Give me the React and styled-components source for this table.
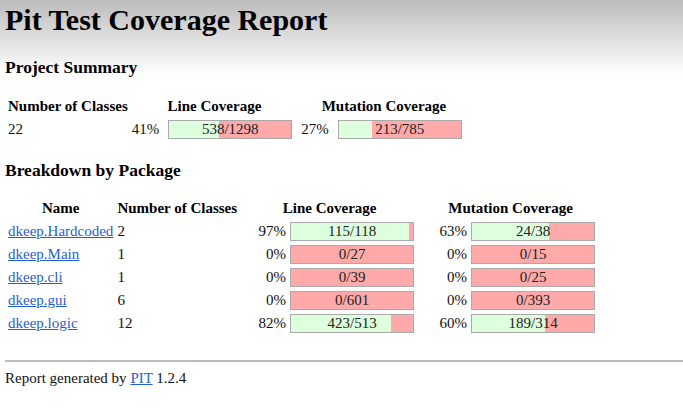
import React from 'react';
import styled, { createGlobalStyle } from 'styled-components';

const GlobalStyle = createGlobalStyle`
  html, body { margin: 0; padding: 0; background: #fff; }
  body {
    font-family: "Liberation Serif", "Times New Roman", serif;
    font-size: 15px;
    color: #111;
  }
`;

const Page = styled.div`
  min-height: 410px;
  padding: 3px 0 0 5px;
  box-sizing: border-box;
  background: linear-gradient(#bcbcbc, #ffffff) no-repeat;
  background-size: 100% 74px;
`;

const Title = styled.h1`
  margin: 0;
  font-size: 30px;
  line-height: 34px;
  font-weight: bold;
  color: #000;
`;

const SectionTitle = styled.h3`
  margin: ${(p) => p.$top}px 0 0;
  font-size: 17.5px;
  line-height: 20px;
  font-weight: bold;
  color: #000;
`;

const Table = styled.table`
  margin-top: ${(p) => p.$top}px;
  border-collapse: separate;
  border-spacing: 2px 0;
  font-size: 15px;
  line-height: 17px;
`;

const Th = styled.th`
  height: ${(p) => p.$h}px;
  padding: 0 1px;
  text-align: center;
  vertical-align: middle;
  font-weight: bold;
  white-space: nowrap;
  color: #000;
`;

const Td = styled.td`
  height: ${(p) => p.$h}px;
  padding: 0 1px;
  text-align: left;
  vertical-align: middle;
  white-space: nowrap;
`;

const PackageLink = styled.a`
  color: #1f60d2;
  text-decoration: underline;
`;

const CoverageCell = styled.div`
  display: flex;
  align-items: center;
  gap: ${(p) => (p.$summary ? 9 : 4)}px;
  padding-right: ${(p) => (p.$summary ? 5 : 4)}px;
`;

const Percentage = styled.span`
  flex: none;
  ${(p) => (p.$summary ? '' : 'width: 45px; text-align: right;')}
`;

const Bar = styled.div`
  position: relative;
  flex: none;
  width: 122px;
  height: 17px;
  border: 1px solid #aaa;
  background: #ffaaaa;
`;

const Complete = styled.div`
  height: 100%;
  background: #ddffdd;
`;

const Legend = styled.span`
  position: absolute;
  inset: 0;
  text-align: center;
  line-height: 17px;
  color: #222;
`;

const Rule = styled.hr`
  margin: 25px 0 0;
  height: 0;
  border: 0;
  border-top: 2px solid #bbb;
`;

const Footer = styled.p`
  margin: 8px 0 0;
  line-height: 17px;
`;

function Coverage({ covered, total, summary }) {
  const pct = total ? Math.round((covered / total) * 100) : 0;
  return (
    <CoverageCell $summary={summary}>
      <Percentage $summary={summary}>{pct}%</Percentage>
      <Bar>
        <Complete style={{ width: `${pct}%` }} />
        <Legend>
          {covered}/{total}
        </Legend>
      </Bar>
    </CoverageCell>
  );
}

const packages = [
  { name: 'dkeep.Hardcoded', classes: 2, line: [115, 118], mut: [24, 38] },
  { name: 'dkeep.Main', classes: 1, line: [0, 27], mut: [0, 15] },
  { name: 'dkeep.cli', classes: 1, line: [0, 39], mut: [0, 25] },
  { name: 'dkeep.gui', classes: 6, line: [0, 601], mut: [0, 393] },
  { name: 'dkeep.logic', classes: 12, line: [423, 513], mut: [189, 314] },
];

export default function App() {
  return (
    <>
      <GlobalStyle />
      <Page>
        <Title>Pit Test Coverage Report</Title>

        <SectionTitle $top={20}>Project Summary</SectionTitle>
        <Table $top={19}>
          <thead>
            <tr>
              <Th $h={20}>Number of Classes</Th>
              <Th $h={20}>Line Coverage</Th>
              <Th $h={20}>Mutation Coverage</Th>
            </tr>
          </thead>
          <tbody>
            <tr>
              <Td $h={27}>22</Td>
              <Td $h={27}>
                <Coverage covered={538} total={1298} summary />
              </Td>
              <Td $h={27}>
                <Coverage covered={213} total={785} summary />
              </Td>
            </tr>
          </tbody>
        </Table>

        <SectionTitle $top={17}>Breakdown by Package</SectionTitle>
        <Table $top={16}>
          <thead>
            <tr>
              <Th $h={24}>Name</Th>
              <Th $h={24}>Number of Classes</Th>
              <Th $h={24}>Line Coverage</Th>
              <Th $h={24}>Mutation Coverage</Th>
            </tr>
          </thead>
          <tbody>
            {packages.map((p) => (
              <tr key={p.name}>
                <Td $h={23}>
                  <PackageLink href="#">{p.name}</PackageLink>
                </Td>
                <Td $h={23}>{p.classes}</Td>
                <Td $h={23}>
                  <Coverage covered={p.line[0]} total={p.line[1]} />
                </Td>
                <Td $h={23}>
                  <Coverage covered={p.mut[0]} total={p.mut[1]} />
                </Td>
              </tr>
            ))}
          </tbody>
        </Table>

        <Rule />
        <Footer>
          Report generated by <PackageLink href="#">PIT</PackageLink> 1.2.4
        </Footer>
      </Page>
    </>
  );
}
